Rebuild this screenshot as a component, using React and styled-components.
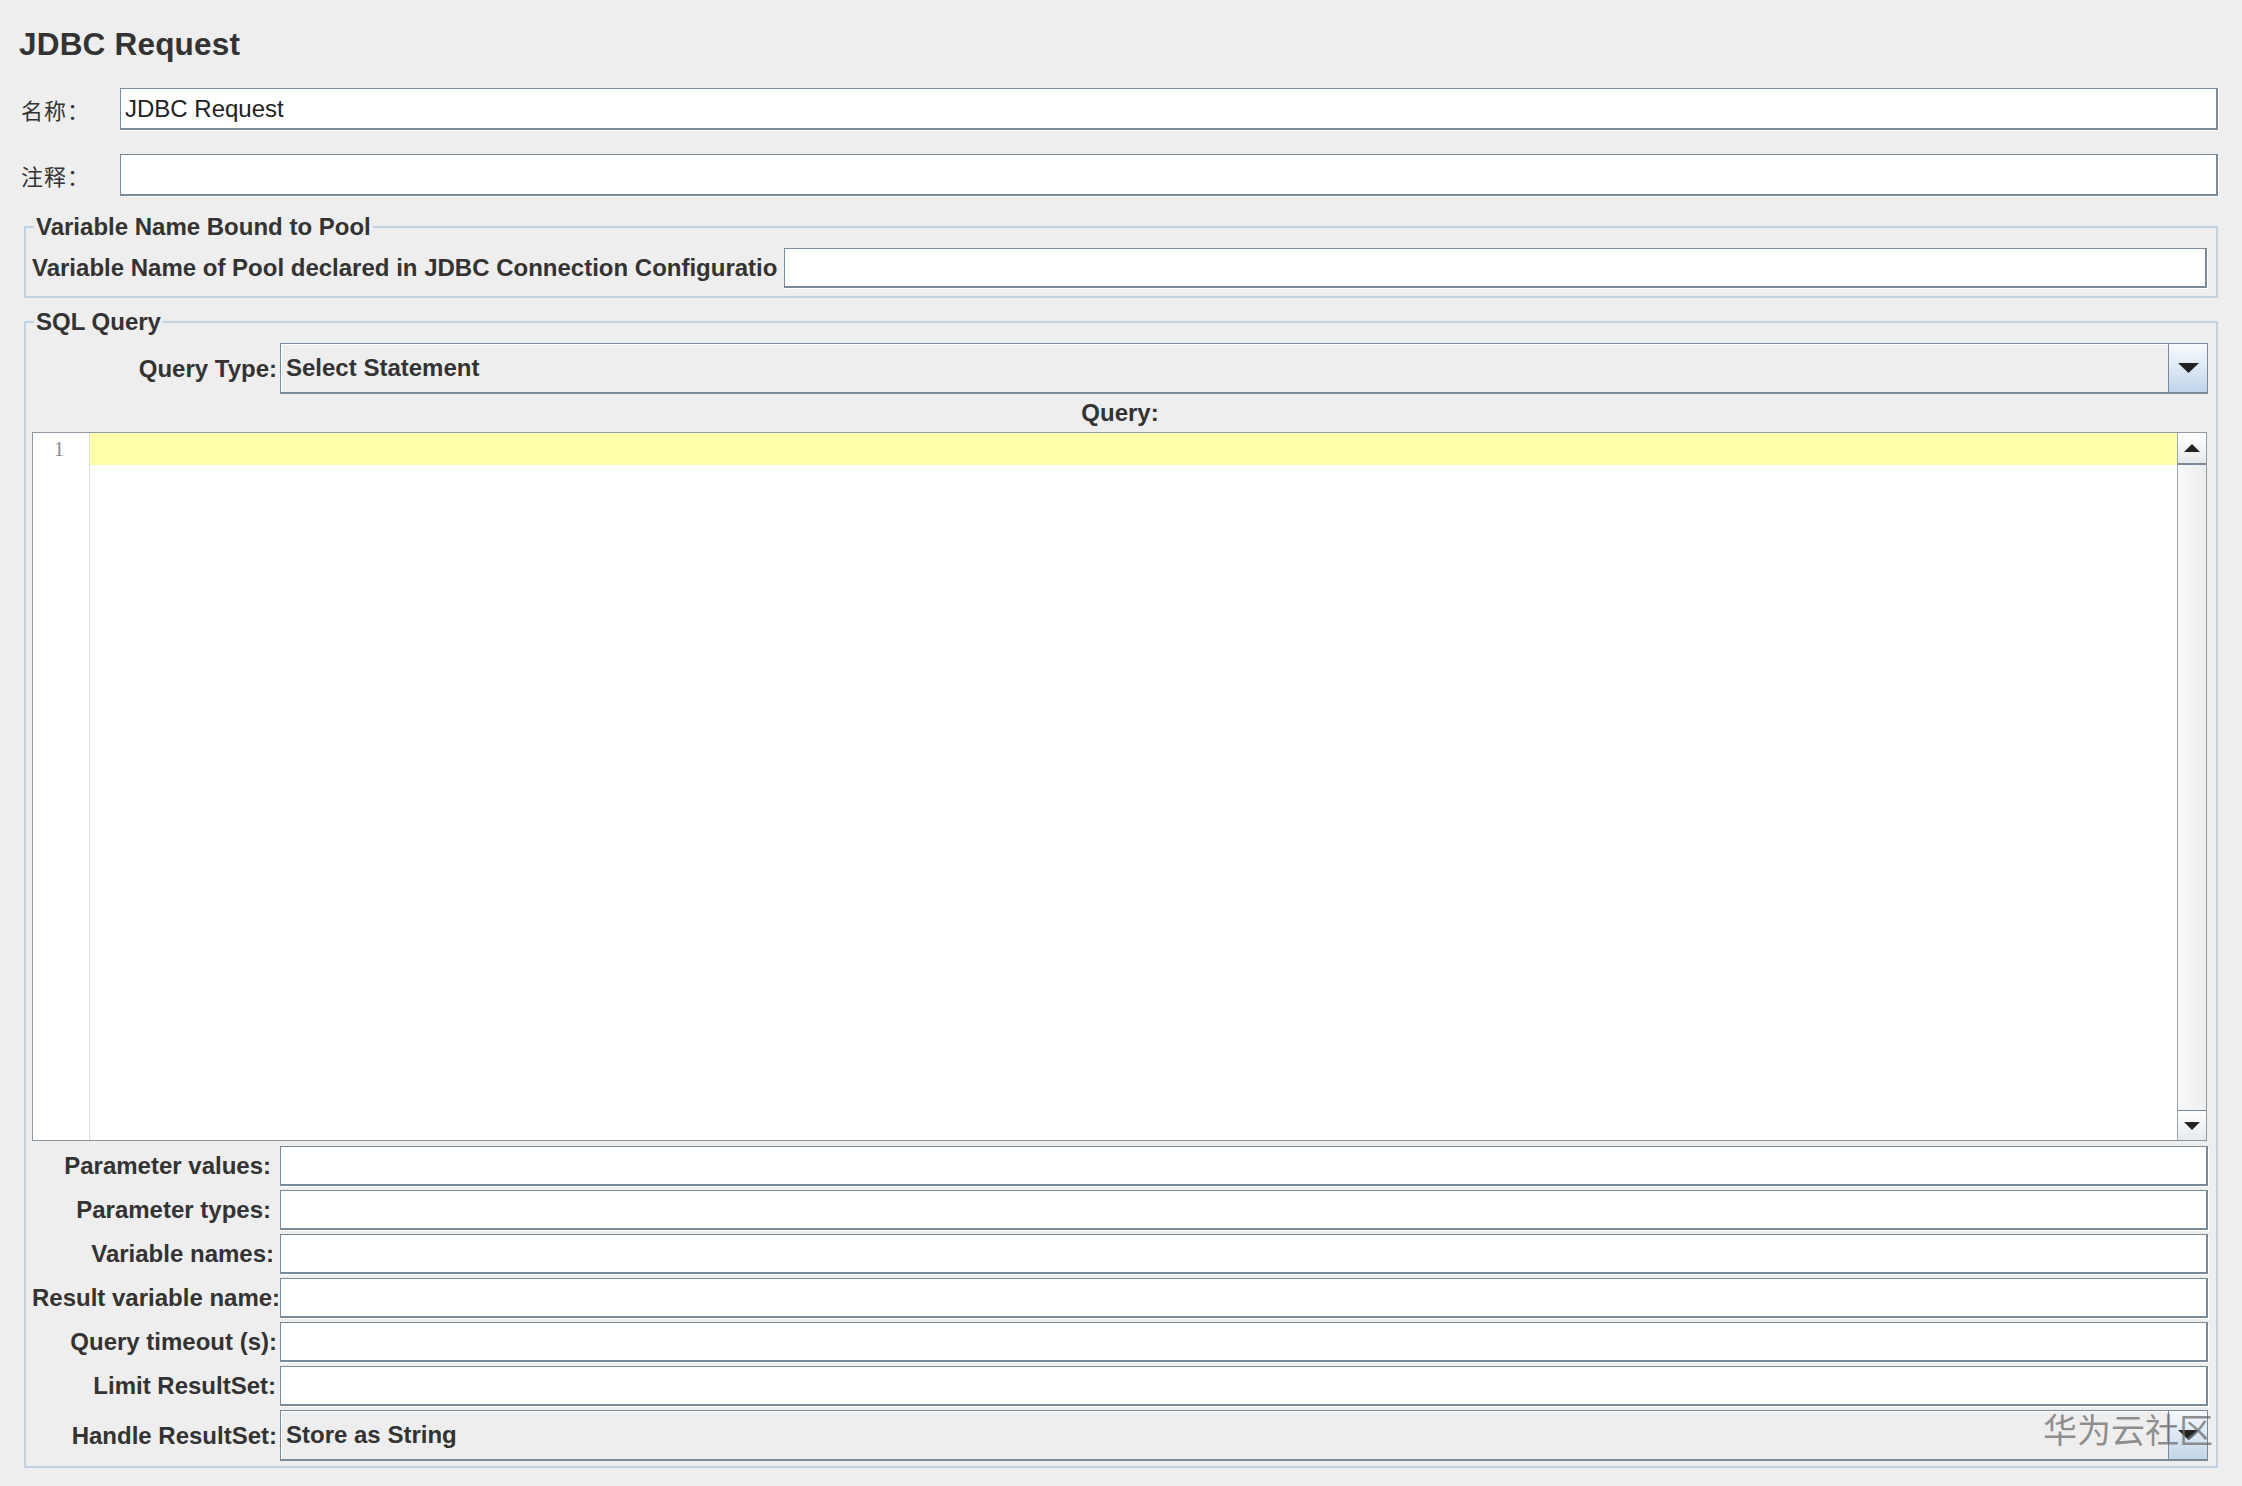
import React from 'react';
import styled, { createGlobalStyle } from 'styled-components';

const GlobalStyle = createGlobalStyle`
    html, body {
        margin: 0;
        padding: 0;
        background: #eeeeee;
    }
    body {
        font-family: "Liberation Sans", Arial, sans-serif;
        color: #333333;
    }
    * {
        box-sizing: border-box;
    }
`;

const Page = styled.div`
    position: relative;
    width: 2242px;
    height: 1486px;
    overflow: hidden;
    background: #eeeeee;
`;

const Title = styled.h1`
    margin: 26px 0 0 19px;
    font-size: 31.5px;
    line-height: 36px;
    font-weight: bold;
    letter-spacing: 0.2px;
    color: #333333;
`;

const NameRow = styled.div`
    display: flex;
    align-items: center;
    margin-top: ${(p) => p.$top}px;
    padding: 0 24px 0 21px;
`;

const CnLabel = styled.label`
    width: 99px;
    flex: none;
    font-family: "Noto Sans CJK SC", "Liberation Sans", sans-serif;
    font-size: 22px;
    letter-spacing: 1px;
    color: #333333;
`;

const TextField = styled.input`
    flex: 1;
    min-width: 0;
    width: 100%;
    height: ${(p) => p.$h || 40}px;
    margin: 0 ${(p) => p.$mr || 0}px 0 0;
    padding: 0 4px;
    background: #ffffff;
    border-style: solid;
    border-color: #7a8a99;
    border-width: 1px 2px 2px 1px;
    border-radius: 0;
    box-shadow: 1px 1px 0 #ffffff;
    font-family: "Liberation Sans", Arial, sans-serif;
    font-size: 24px;
    color: #222222;
    outline: none;
`;

const Group = styled.fieldset`
    margin: ${(p) => p.$top}px 24px 0 24px;
    padding: 7px 8px ${(p) => p.$bottom}px 6px;
    border: 2px solid #c3d2e2;
    min-width: 0;
`;

const Legend = styled.legend`
    margin-left: 2px;
    padding: 0 2px;
    font-size: 24px;
    line-height: 28px;
    font-weight: bold;
    color: #333333;
`;

const PoolRow = styled.div`
    display: flex;
    align-items: center;
`;

const BoldLabel = styled.label`
    font-size: 24px;
    font-weight: bold;
    color: #333333;
    white-space: nowrap;
`;

const PoolLabel = styled(BoldLabel)`
    width: 752px;
    flex: none;
    overflow: hidden;
`;

const FieldGrid = styled.div`
    display: grid;
    grid-template-columns: 245px 1fr;
    column-gap: 3px;
    row-gap: 4px;
    align-items: center;
    margin-top: ${(p) => p.$top || 0}px;
`;

const RowLabel = styled(BoldLabel)`
    text-align: right;
    padding-right: ${(p) => p.$trail || 0}px;
`;

const Combo = styled.div`
    display: flex;
    height: 51px;
    background: #eeeeee;
    border: 1px solid #7a8a99;
    border-bottom-width: 2px;
`;

const ComboText = styled.div`
    flex: 1;
    display: flex;
    align-items: center;
    padding-left: 5px;
    font-size: 24px;
    font-weight: bold;
    color: #333333;
    box-shadow: inset 1px 1px 0 #ffffff;
`;

const ComboButton = styled.div`
    width: 39px;
    flex: none;
    display: flex;
    align-items: center;
    justify-content: center;
    border-left: 1px solid #7a8a99;
    background: linear-gradient(#f7fafd, #c2d5ea);
`;

const Caption = styled.div`
    height: 38px;
    display: flex;
    align-items: center;
    justify-content: center;
    font-size: 24px;
    font-weight: bold;
    color: #333333;
`;

const Editor = styled.div`
    display: flex;
    height: 709px;
    margin-right: 1px;
    border: 1px solid #8e99a4;
    background: #ffffff;
`;

const Gutter = styled.div`
    width: 57px;
    flex: none;
    border-right: 1px solid #dcdcdc;
`;

const LineNo = styled.div`
    height: 32px;
    line-height: 32px;
    padding-right: 4px;
    text-align: center;
    font-family: "Liberation Serif", "Times New Roman", serif;
    font-size: 21px;
    color: #8c8c8c;
`;

const TextArea = styled.div`
    flex: 1;
`;

const CurrentLine = styled.div`
    height: 32px;
    background: #ffffaa;
`;

const ScrollBar = styled.div`
    width: 29px;
    flex: none;
    display: flex;
    flex-direction: column;
    border-left: 1px solid #9aa5b0;
    background: #f3f3f3;
`;

const ScrollButton = styled.div`
    height: ${(p) => p.$h}px;
    flex: none;
    display: flex;
    align-items: center;
    justify-content: center;
    background: linear-gradient(#ffffff, #e6e9ec);
    border-style: solid;
    border-color: #7a8a99;
    border-width: ${(p) => (p.$down ? '1px 0 0 0' : '0 0 2px 0')};
`;

const Track = styled.div`
    flex: 1;
    background: linear-gradient(90deg, #f8f8f8, #eeeeee);
`;

const Watermark = styled.div`
    position: absolute;
    top: 1409px;
    right: 29px;
    font-family: "Noto Sans CJK SC", sans-serif;
    font-size: 34px;
    line-height: 40px;
    color: rgba(110, 110, 110, 0.75);
    pointer-events: none;
`;

const Arrow = ({ up, w = 21, h = 10 }) => (
    <svg width={w} height={h} viewBox={`0 0 ${w} ${h}`}>
        <path
            d={up ? `M0 ${h}H${w}L${w / 2} 0Z` : `M0 0H${w}L${w / 2} ${h}Z`}
            fill="#222222"
        />
    </svg>
);

const Select = ({ value }) => (
    <Combo>
        <ComboText>{value}</ComboText>
        <ComboButton>
            <Arrow />
        </ComboButton>
    </Combo>
);

const params = [
    { label: 'Parameter values:', trail: 6 },
    { label: 'Parameter types:', trail: 6 },
    { label: 'Variable names:', trail: 3 },
    { label: 'Result variable name:', trail: 0 },
    { label: 'Query timeout (s):', trail: 0 },
    { label: 'Limit ResultSet:', trail: 1 },
];

const App = () => {
    return (
        <Page>
            <GlobalStyle />
            <Title>JDBC Request</Title>

            <NameRow $top={26}>
                <CnLabel>名称：</CnLabel>
                <TextField $h={42} defaultValue="JDBC Request" />
            </NameRow>
            <NameRow $top={24}>
                <CnLabel>注释：</CnLabel>
                <TextField $h={42} defaultValue="" />
            </NameRow>

            <Group $top={17} $bottom={8}>
                <Legend>Variable Name Bound to Pool</Legend>
                <PoolRow>
                    <PoolLabel>Variable Name of Pool declared in JDBC Connection Configuratio</PoolLabel>
                    <TextField defaultValue="" $mr={1} />
                </PoolRow>
            </Group>

            <Group $top={10} $bottom={5}>
                <Legend>SQL Query</Legend>
                <FieldGrid>
                    <RowLabel>Query Type:</RowLabel>
                    <Select value="Select Statement" />
                </FieldGrid>
                <Caption>Query:</Caption>
                <Editor>
                    <Gutter>
                        <LineNo>1</LineNo>
                    </Gutter>
                    <TextArea>
                        <CurrentLine />
                    </TextArea>
                    <ScrollBar>
                        <ScrollButton $h={32}>
                            <Arrow up w={16} h={8} />
                        </ScrollButton>
                        <Track />
                        <ScrollButton $h={30} $down>
                            <Arrow w={16} h={8} />
                        </ScrollButton>
                    </ScrollBar>
                </Editor>
                <FieldGrid $top={5}>
                    {params.map((p) => (
                        <React.Fragment key={p.label}>
                            <RowLabel $trail={p.trail}>{p.label}</RowLabel>
                            <TextField defaultValue="" $mr={1} />
                        </React.Fragment>
                    ))}
                    <RowLabel>Handle ResultSet:</RowLabel>
                    <Select value="Store as String" />
                </FieldGrid>
            </Group>

            <Watermark>华为云社区</Watermark>
        </Page>
    );
};

export default App;
